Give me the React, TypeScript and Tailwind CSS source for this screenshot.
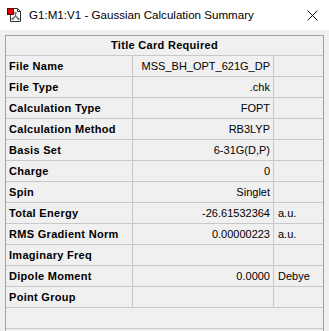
const rows: [string, string, string][] = [
  ["File Name", "MSS_BH_OPT_621G_DP", ""],
  ["File Type", ".chk", ""],
  ["Calculation Type", "FOPT", ""],
  ["Calculation Method", "RB3LYP", ""],
  ["Basis Set", "6-31G(D,P)", ""],
  ["Charge", "0", ""],
  ["Spin", "Singlet", ""],
  ["Total Energy", "-26.61532364", "a.u."],
  ["RMS Gradient Norm", "0.00000223", "a.u."],
  ["Imaginary Freq", "", ""],
  ["Dipole Moment", "0.0000", "Debye"],
  ["Point Group", "", ""],
];

function DocIcon() {
  return (
    <svg width="16" height="16" viewBox="0 0 16 16">
      <path d="M3.5 1.5h7l3 3v10h-10z" fill="#fff" stroke="#333" />
      <path d="M10.5 1.5v3h3" fill="none" stroke="#333" />
      <line x1="8.5" y1="6" x2="8.5" y2="9" stroke="#666" strokeWidth="1.2" />
      <line x1="8.5" y1="9" x2="5.5" y2="12" stroke="#666" strokeWidth="1.2" />
      <line x1="8.5" y1="9" x2="11.5" y2="12" stroke="#666" strokeWidth="1.2" />
      <circle cx="8.5" cy="6" r="1.2" fill="#777" />
      <circle cx="5.5" cy="12" r="1.2" fill="#777" />
      <circle cx="11.5" cy="12" r="1.2" fill="#777" />
      <rect x="0.5" y="1.5" width="6" height="6" fill="#e00000" stroke="#600" />
    </svg>
  );
}

export default function App() {
  return (
    <div className="w-[329px] h-[331px] overflow-hidden bg-white font-['Liberation_Sans',Arial,sans-serif]">
      <div className="h-[30px] flex items-center pl-[7px] pr-[11px] bg-white">
        <DocIcon />
        <span className="ml-[6px] text-[11.6px] text-black">
          G1:M1:V1 - Gaussian Calculation Summary
        </span>
        <svg className="ml-auto" width="11" height="11" viewBox="0 0 11 11">
          <path d="M0.5 0.5l10 10M10.5 0.5l-10 10" stroke="#111" strokeWidth="1" />
        </svg>
      </div>
      <div className="h-[301px] bg-[#f0f0f0] pt-[5px] pl-[5px] pr-[5px]">
        <div className="w-[319px] h-[300px] border-t border-l border-r border-[#a0a0a8] text-[11px] text-black">
          <div className="h-[20px] border-b border-[#c8c8c8] flex items-center justify-center font-bold tracking-[0.3px]">
            Title Card Required
          </div>
          {rows.map(([label, value, unit]) => (
            <div key={label} className="h-[21px] border-b border-[#c8c8c8] flex">
              <div className="w-[127px] border-r border-[#c8c8c8] flex items-center pl-[3px] font-bold tracking-[0.3px]">
                {label}
              </div>
              <div className="w-[141px] border-r border-[#c8c8c8] flex items-center justify-end pr-[3px]">
                {value}
              </div>
              <div className="flex-1 flex items-center pl-[4px]">{unit}</div>
            </div>
          ))}
          <div className="h-[21px] border-b border-[#c8c8c8]" />
        </div>
      </div>
    </div>
  );
}
